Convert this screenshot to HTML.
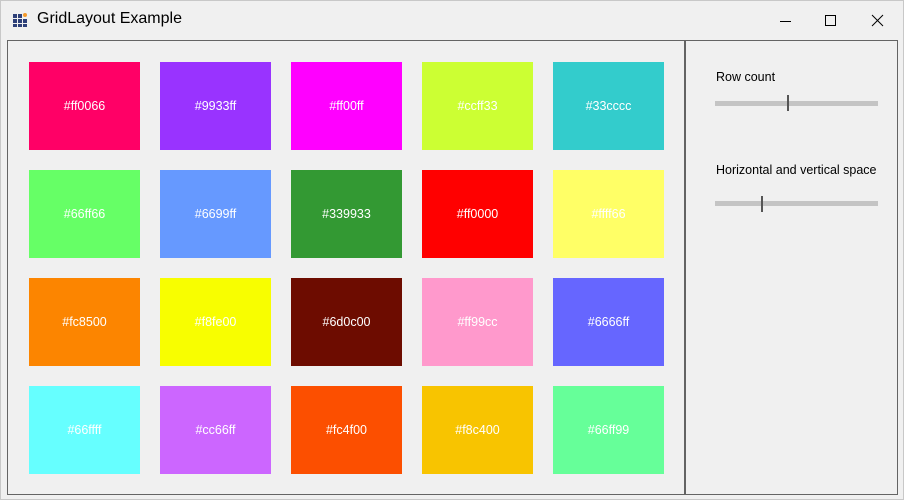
<!DOCTYPE html>
<html><head><meta charset="utf-8"><style>
*{margin:0;padding:0;box-sizing:border-box}
body{width:905px;height:500px;background:#fff;font-family:"Segoe UI","Liberation Sans",sans-serif;position:relative;overflow:hidden}
.win{position:absolute;left:0;top:0;width:904px;height:500px;background:#f0f0f0;border:1px solid #c8c8c8}
.title{position:absolute;left:37px;top:10px;font-size:16px;color:#000}
.frame{position:absolute;left:7px;top:40px;width:891px;height:455px;border:1px solid #646464}
.div{position:absolute;left:684px;top:40px;width:2px;height:455px;background:#646464}
.t{position:absolute;width:111px;height:88px;color:#fff;font-size:12.5px;display:flex;align-items:center;justify-content:center}
.lbl{position:absolute;left:716px;font-size:12.5px;color:#000}
.track{position:absolute;left:715px;width:163px;height:5px;background:#c4c4c4}
.h{position:absolute;width:2px;height:16px;background:#555}
</style></head><body>
<div class="win"></div>
<svg style="position:absolute;left:13px;top:12px" width="16" height="16" viewBox="0 0 16 16">
<rect x="0" y="2" width="4" height="4" fill="#2d3f78"/><rect x="5" y="2" width="4" height="4" fill="#2d3f78"/>
<rect x="0" y="7" width="4" height="4" fill="#2d3f78"/><rect x="5" y="7" width="4" height="4" fill="#2d3f78"/><rect x="10" y="7" width="4" height="4" fill="#2d3f78"/>
<rect x="0" y="12" width="4" height="3" fill="#2d3f78"/><rect x="5" y="12" width="4" height="3" fill="#2d3f78"/><rect x="10" y="12" width="4" height="3" fill="#2d3f78"/>
<circle cx="12" cy="3" r="2" fill="#f39a2b"/></svg>
<div class="title">GridLayout Example</div>
<svg style="position:absolute;left:780px;top:14px" width="110" height="14" viewBox="0 0 110 14">
<line x1="0" y1="7.5" x2="11" y2="7.5" stroke="#000"/>
<rect x="45.5" y="1.5" width="10" height="10" fill="none" stroke="#000"/>
<path d="M92 1L103 12M103 1L92 12" stroke="#000"/></svg>
<div class="frame"></div><div class="div"></div>
<div class="t" style="left:29px;top:62px;background:#ff0066">#ff0066</div>
<div class="t" style="left:160px;top:62px;background:#9933ff">#9933ff</div>
<div class="t" style="left:291px;top:62px;background:#ff00ff">#ff00ff</div>
<div class="t" style="left:422px;top:62px;background:#ccff33">#ccff33</div>
<div class="t" style="left:553px;top:62px;background:#33cccc">#33cccc</div>
<div class="t" style="left:29px;top:170px;background:#66ff66">#66ff66</div>
<div class="t" style="left:160px;top:170px;background:#6699ff">#6699ff</div>
<div class="t" style="left:291px;top:170px;background:#339933">#339933</div>
<div class="t" style="left:422px;top:170px;background:#ff0000">#ff0000</div>
<div class="t" style="left:553px;top:170px;background:#ffff66">#ffff66</div>
<div class="t" style="left:29px;top:278px;background:#fc8500">#fc8500</div>
<div class="t" style="left:160px;top:278px;background:#f8fe00">#f8fe00</div>
<div class="t" style="left:291px;top:278px;background:#6d0c00">#6d0c00</div>
<div class="t" style="left:422px;top:278px;background:#ff99cc">#ff99cc</div>
<div class="t" style="left:553px;top:278px;background:#6666ff">#6666ff</div>
<div class="t" style="left:29px;top:386px;background:#66ffff">#66ffff</div>
<div class="t" style="left:160px;top:386px;background:#cc66ff">#cc66ff</div>
<div class="t" style="left:291px;top:386px;background:#fc4f00">#fc4f00</div>
<div class="t" style="left:422px;top:386px;background:#f8c400">#f8c400</div>
<div class="t" style="left:553px;top:386px;background:#66ff99">#66ff99</div>
<div class="lbl" style="top:70px">Row count</div>
<div class="track" style="top:101px"></div><div class="h" style="left:787px;top:95px"></div>
<div class="lbl" style="top:163px">Horizontal and vertical space</div>
<div class="track" style="top:201px"></div><div class="h" style="left:761px;top:196px"></div>
</body></html>
